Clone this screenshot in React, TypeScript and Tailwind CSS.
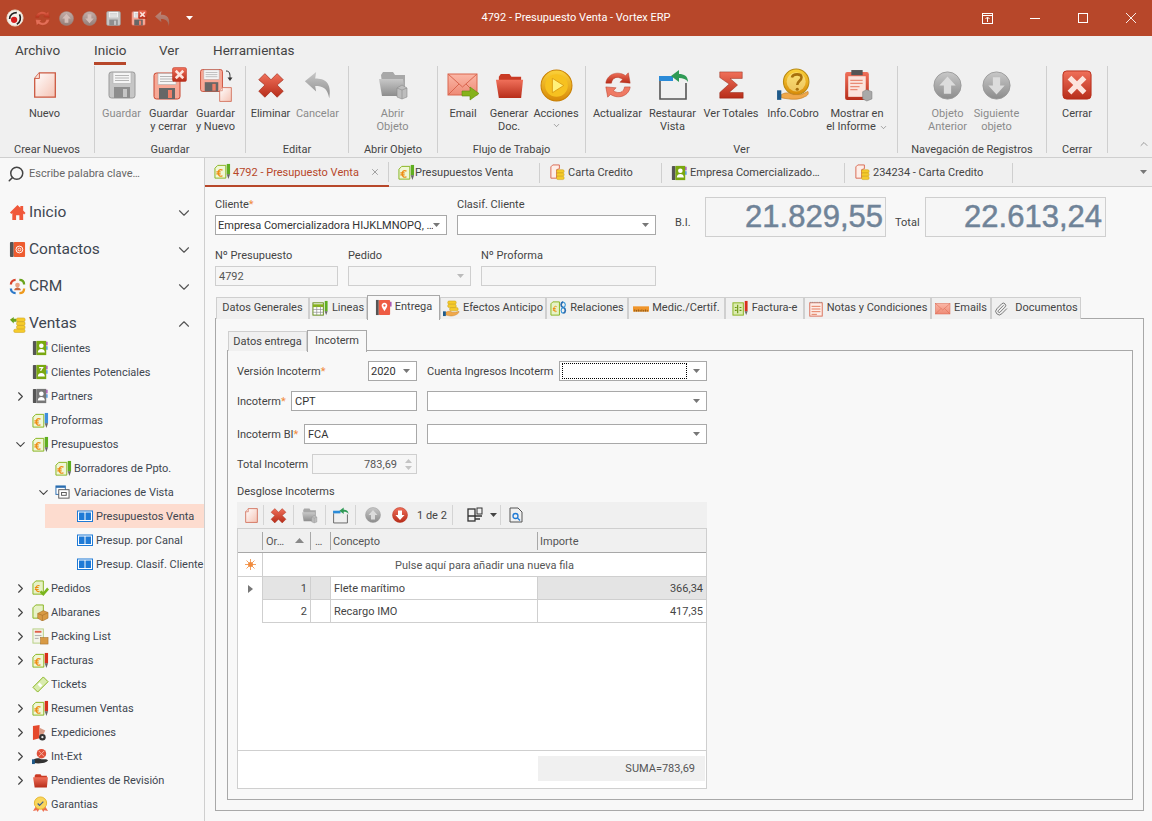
import React from 'react'
import { ChevronDown, ChevronRight, ChevronUp, Paperclip, Search, X as XIcon } from 'lucide-react'

type IP = { s?: number; c?: string; gray?: boolean }

const Defs = () => (
    <svg width="0" height="0" className="absolute">
        <defs>
            <linearGradient id="pink" x1="0" y1="0" x2="1" y2="1"><stop offset="0" stopColor="#ffffff" /><stop offset="1" stopColor="#f5c3b4" /></linearGradient>
            <linearGradient id="red" x1="0" y1="0" x2="0" y2="1"><stop offset="0" stopColor="#f0705a" /><stop offset="1" stopColor="#b72d1a" /></linearGradient>
            <linearGradient id="gray" x1="0" y1="0" x2="0" y2="1"><stop offset="0" stopColor="#c8c8c8" /><stop offset="1" stopColor="#8c8c8c" /></linearGradient>
            <linearGradient id="gold" x1="0" y1="0" x2="0" y2="1"><stop offset="0" stopColor="#fbd23a" /><stop offset="1" stopColor="#d88a08" /></linearGradient>
            <linearGradient id="salmon" x1="0" y1="0" x2="0" y2="1"><stop offset="0" stopColor="#fbb7a6" /><stop offset="1" stopColor="#ee8a76" /></linearGradient>
        </defs>
    </svg>
)

const NewDoc = ({ s = 32 }: IP) => (
    <svg width={s} height={s} viewBox="0 0 32 32"><path d="M10 3h17v26H5V9z" fill="url(#pink)" stroke="#cc5a42" strokeWidth="1.4" /><path d="M10 3v6H5" fill="#f9e0d8" stroke="#cc5a42" strokeWidth="1" /></svg>
)
const Floppy = ({ s = 32, gray }: IP) => (
    <svg width={s} height={s} viewBox="0 0 32 32">
        <rect x="3" y="3" width="26" height="26" rx="2.5" fill={gray ? '#c6c6c6' : '#f7a896'} stroke={gray ? '#9a9a9a' : '#c8452f'} strokeWidth="1" />
        <rect x="7" y="3.5" width="18" height="11" fill="#f5f5f5" stroke="#b0b0b0" strokeWidth=".6" />
        <path d="M9 6.5h14M9 9h14M9 11.5h14" stroke="#a5a5a5" strokeWidth=".8" />
        <rect x="8" y="18" width="16" height="11" fill={gray ? '#8e8e8e' : '#666'} />
        <rect x="17" y="20" width="4" height="8" fill={gray ? '#c6c6c6' : '#ef7f68'} />
    </svg>
)
const XMark = ({ s = 32 }: IP) => (
    <svg width={s} height={s} viewBox="0 0 32 32"><path d="M9 3l7 7 7-7 7 7-7 6 7 7-7 7-7-7-7 7-7-7 7-7-7-6z" fill="url(#red)" stroke="#a32a18" strokeWidth=".8" /></svg>
)
const Undo = ({ s = 32 }: IP) => (
    <svg width={s} height={s} viewBox="0 0 32 32"><path d="M2 12L14 2l-1 7c10 0 18 4 15 21-2-11-7-13-15-13l1 6z" fill="url(#gray)" /></svg>
)
const FolderBox = ({ s = 32 }: IP) => (
    <svg width={s} height={s} viewBox="0 0 32 32"><path d="M4 6l2-3h10l2 3h10v17H6z" fill="#a8a8a8" /><path d="M2 10h24l2 17H5z" fill="url(#gray)" /><path d="M20 19l5-3 5 3v9l-5 2-5-2z" fill="#bdbdbd" stroke="#8c8c8c" strokeWidth=".6" /><path d="M20 19l5 2 5-2M25 21v9" stroke="#8c8c8c" strokeWidth=".6" fill="none" /></svg>
)
const Mail = ({ s = 32, c }: IP) => (
    <svg width={s} height={s} viewBox="0 0 32 32">
        <rect x="1" y="5" width="29" height="21" fill="url(#salmon)" stroke="#d9664f" />
        <path d="M1 5l14.5 13L30 5M1 26l11-11M30 26L19 15" fill="none" stroke="#d9664f" />
        {c !== 'plain' && <path d="M15 22h8v-4l9 6.5-9 6.5v-4h-8z" fill="#86b21b" stroke="#5f8a10" strokeWidth=".6" />}
    </svg>
)
const Folder = ({ s = 32 }: IP) => (
    <svg width={s} height={s} viewBox="0 0 32 32"><path d="M5 7l2-3h9l2 3h10v6H5z" fill="#c93a24" /><path d="M2 10h28l-2 19H5z" fill="url(#red)" /></svg>
)
const PlayCircle = ({ s = 32 }: IP) => (
    <svg width={s} height={s} viewBox="0 0 32 32"><circle cx="16" cy="16" r="15" fill="url(#gold)" stroke="#c98106" /><circle cx="16" cy="16" r="11" fill="#f6c120" /><path d="M12 9l11 7-11 7z" fill="#fff27a" stroke="#d8950d" strokeWidth=".8" /></svg>
)
const Refresh = ({ s = 32 }: IP) => (
    <svg width={s} height={s} viewBox="0 0 32 32">
        <path d="M3 14C4 5 15 0 24 6l3-3 2 11-11-1 3-3c-6-4-11-2-12 4z" fill="url(#red)" stroke="#b13420" strokeWidth=".5" />
        <path d="M29 18c-1 9-12 14-21 8l-3 3-2-11 11 1-3 3c6 4 11 2 12-4z" fill="#ef7a64" stroke="#b13420" strokeWidth=".5" />
    </svg>
)
const RestoreView = ({ s = 32 }: IP) => (
    <svg width={s} height={s} viewBox="0 0 32 32">
        <path d="M2 7h14v5H2z" fill="#2b8bd8" />
        <path d="M3 12v18h26V14" fill="none" stroke="#555" strokeWidth="1.6" />
        <path d="M14 7l8-6v4c5 0 9 2 9 8-2-3-5-4-9-4v4z" fill="#2f9a55" />
    </svg>
)
const Sigma = ({ s = 32 }: IP) => (
    <svg width={s} height={s} viewBox="0 0 32 32"><path d="M4 2h24v7h-13l8 7-9 8h15v6H4v-6l10-9L4 8z" fill="url(#red)" stroke="#8f2413" strokeWidth=".5" /></svg>
)
const Info = ({ s = 32 }: IP) => (
    <svg width={s} height={s} viewBox="0 0 32 32">
        <circle cx="19" cy="13" r="12" fill="url(#gold)" stroke="#b98a12" />
        <circle cx="19" cy="13" r="9" fill="#fdf0a4" opacity=".55" />
        <path d="M15 9c1-4 9-4 9 0 0 3-4 3-4 7" fill="none" stroke="#a8700c" strokeWidth="2.4" /><circle cx="20" cy="20" r="1.5" fill="#a8700c" />
        <path d="M5 25c5-3 9-1 11 0h8l6-3c1 2 0 4-3 5-5 3-12 3-22 1z" fill="#f0a84a" stroke="#c27a1e" strokeWidth=".6" />
        <rect x="1" y="21" width="4" height="9" fill="#1f5a8a" />
    </svg>
)
const Clipboard = ({ s = 32 }: IP) => (
    <svg width={s} height={s} viewBox="0 0 32 32">
        <rect x="4" y="3" width="23" height="27" rx="2" fill="url(#red)" />
        <rect x="7" y="7" width="17" height="20" fill="#fbe3dc" />
        <rect x="10" y="1" width="11" height="5" fill="#555" />
        <path d="M9 11h12M9 14h12M9 17h9M9 20h7" stroke="#e98b75" strokeWidth="1.2" />
        <path d="M21 22l4-2 5 2v7l-5 2-4-2z" fill="#a9a9a9" stroke="#777" strokeWidth=".5" />
    </svg>
)
const NavCircle = ({ s = 32, c = 'gray', up }: IP & { up?: boolean }) => (
    <svg width={s} height={s} viewBox="0 0 32 32">
        <circle cx="16" cy="16" r="15" fill={c === 'red' ? 'url(#red)' : 'url(#gray)'} stroke={c === 'red' ? '#b72d1a' : '#999'} />
        <path d={up ? 'M16 6l9 10h-5v9h-8v-9H7z' : 'M16 26l9-10h-5V7h-8v9H7z'} fill={c === 'red' ? '#fff' : '#dcdcdc'} />
    </svg>
)
const CloseBox = ({ s = 32 }: IP) => (
    <svg width={s} height={s} viewBox="0 0 32 32"><rect x="1" y="1" width="30" height="30" rx="4" fill="url(#red)" stroke="#b72d1a" /><path d="M10 6l6 6 6-6 4 4-6 6 6 6-4 4-6-6-6 6-4-4 6-6-6-6z" fill="#fce4dd" /></svg>
)
const Logo = ({ s = 20 }: IP) => (
    <svg width={s} height={s} viewBox="0 0 20 20"><circle cx="10" cy="10" r="9" fill="#f4f0ea" stroke="#e8d9c6" /><circle cx="9" cy="12" r="3.5" fill="#d51d1d" /><path d="M4 11c0-5 4-7 8-7M15 6c2 4 1 9-3 11" fill="none" stroke="#222" strokeWidth="1.8" /></svg>
)
const DocEuro = ({ s = 18, c = '#3f8fdc' }: IP) => (
    <svg width={s} height={s} viewBox="0 0 18 18">
        <path d="M4 2.500h8.500v13.500H1V5.500z" fill="#eff7d6" stroke="#86b21b" />
        <path d="M9 7.500C6 6 4.500 8 4.500 10.500S6 15 9 13.500M2.500 9.500h4.500M2.500 11.500h4.500" fill="none" stroke="#ee8a10" strokeWidth="1.300" />
        <rect x="13.500" y="1" width="3.500" height="11" fill={c} />
        <path d="M13.500 12h3.500L15.250 17z" fill="#666" />
    </svg>
)
const Book = ({ s = 18, c = '#7aa80f', q }: IP & { q?: boolean }) => (
    <svg width={s} height={s} viewBox="0 0 18 18">
        <rect x="1" y="1" width="4" height="16" rx="1" fill="#555" />
        <rect x="5" y="1" width="11" height="16" fill={c} />
        <rect x="16" y="2" width="1.5" height="4" fill="#a14ab0" /><rect x="16" y="7" width="1.5" height="4" fill="#3f8fdc" />
        {q ? <path d="M8 4h4l-2 3v1" fill="none" stroke="#fff" strokeWidth="1.3" /> : <circle cx="10.5" cy="6.5" r="2.6" fill="#fff" />}
        <path d="M6.5 14c0-3 2-4 4-4s4 1 4 4z" fill="#fff" />
    </svg>
)
const ContactBook = ({ s = 18 }: IP) => (
    <svg width={s} height={s} viewBox="0 0 18 18"><rect x="1" y="1" width="4" height="16" rx="1" fill="#555" /><rect x="5" y="1" width="12" height="16" rx="1" fill="#ee5c30" /><circle cx="11" cy="9" r="3.600" fill="none" stroke="#fff" strokeWidth="1" /><circle cx="11" cy="9" r="1.500" fill="none" stroke="#fff" strokeWidth=".9" /></svg>
)
const Home = ({ s = 18 }: IP) => (
    <svg width={s} height={s} viewBox="0 0 18 18"><path d="M9 1l3 3V2h3v5l2.500 2.500-1.500 1.500-1-1V17h-4v-5H7.500v5H3.500V9.500l-1 1L1 9z" fill="#f0583a" /></svg>
)
const Crm = ({ s = 18 }: IP) => (
    <svg width={s} height={s} viewBox="0 0 18 18">
        <path d="M2 7c0-3 2-5 5-5" fill="none" stroke="#d8432c" strokeWidth="2.400" /><path d="M11 2c3 0 5 2 5 5" fill="none" stroke="#6aa31c" strokeWidth="2.400" />
        <path d="M16 11c0 3-2 5-5 5" fill="none" stroke="#ee9a1f" strokeWidth="2.400" /><path d="M7 16c-3 0-5-2-5-5" fill="none" stroke="#2c78c8" strokeWidth="2.400" />
        <circle cx="9" cy="7.500" r="2.500" fill="#e8a182" /><path d="M5.500 13c0-2 2-3 3.500-3s3.500 1 3.500 3z" fill="#c9673f" />
    </svg>
)
const Coins = ({ s = 18 }: IP) => (
    <svg width={s} height={s} viewBox="0 0 18 18">
        <path d="M1 4l4-3v2h3v3H5v2z" fill="#6aa31c" />
        <rect x="8" y="2" width="9" height="4" rx="1.500" fill="#f5cb2c" stroke="#c79a12" strokeWidth=".5" /><rect x="8" y="6" width="9" height="4" rx="1.500" fill="#f5cb2c" stroke="#c79a12" strokeWidth=".5" />
        <rect x="8" y="10" width="9" height="4" rx="1.500" fill="#f5cb2c" stroke="#c79a12" strokeWidth=".5" /><rect x="5" y="14" width="12" height="3.500" rx="1.500" fill="#f5cb2c" stroke="#c79a12" strokeWidth=".5" />
    </svg>
)
const Variation = ({ s = 16 }: IP) => (
    <svg width={s} height={s} viewBox="0 0 16 16"><rect x="1" y="1" width="10" height="9" fill="#fff" stroke="#2a6db0" /><rect x="1" y="1" width="10" height="2" fill="#2a6db0" /><rect x="4" y="5" width="11" height="9" fill="#fff" stroke="#555" /><rect x="7" y="8" width="5" height="3" fill="none" stroke="#555" /></svg>
)
const Columns = ({ s = 16 }: IP) => (
    <svg width={s} height={s} viewBox="0 0 16 16"><rect x=".5" y="3" width="15" height="10.500" fill="#fff" stroke="#1f7ad6" /><rect x="2" y="4.500" width="5.500" height="7.500" fill="#1f7ad6" /><rect x="8.500" y="4.500" width="5.500" height="7.500" fill="#1f7ad6" /></svg>
)
const DocCheck = ({ s = 18 }: IP) => (
    <svg width={s} height={s} viewBox="0 0 18 18"><path d="M4 1h8v14H1V4z" fill="#e6f2c6" stroke="#86b21b" /><path d="M8 6C5.500 5 4 7 4 9s2 4 4 3M3 8h4M3 10h4" fill="none" stroke="#ee8a10" strokeWidth="1.100" /><path d="M8 13l2-2 2 2 4-5 2 2-6 7z" fill="#7ab51d" /></svg>
)
const DocBox = ({ s = 18 }: IP) => (
    <svg width={s} height={s} viewBox="0 0 18 18"><path d="M4 1h8v14H1V4z" fill="#e6f2c6" stroke="#86b21b" /><path d="M6 10l6-3 5 2v6l-6 3-5-3z" fill="#d89a45" stroke="#9d6520" strokeWidth=".5" /><path d="M6 10l5 2 6-3M11 12v6" fill="none" stroke="#9d6520" strokeWidth=".5" /></svg>
)
const Packing = ({ s = 18 }: IP) => (
    <svg width={s} height={s} viewBox="0 0 18 18"><rect x="1" y="1" width="11" height="15" fill="#f4f4ea" stroke="#b5cf80" /><path d="M3 4h7" stroke="#e0604a" strokeWidth="2" /><path d="M3 8h7M3 11h4" stroke="#aaa" /><rect x="9" y="10" width="8" height="7" fill="#d89a45" stroke="#9d6520" strokeWidth=".5" /></svg>
)
const Ticket = ({ s = 18 }: IP) => (
    <svg width={s} height={s} viewBox="0 0 18 18"><path d="M12 1l5 5L6 17l-5-5z" fill="#d9ecae" stroke="#86b21b" /><path d="M7 8l3 3" stroke="#fff" strokeWidth="3" /></svg>
)
const Expedition = ({ s = 18 }: IP) => (
    <svg width={s} height={s} viewBox="0 0 18 18"><path d="M1 2l7-1v14l-7 2z" fill="#e5492c" /><path d="M8 4l6 3-3 6-3-1z" fill="#d89a85" /><circle cx="11" cy="14" r="3.500" fill="#333" /><circle cx="11" cy="14" r="1.200" fill="#eee" /></svg>
)
const IntExt = ({ s = 18 }: IP) => (
    <svg width={s} height={s} viewBox="0 0 18 18"><circle cx="10" cy="6" r="5" fill="#e0503a" /><path d="M7 3l6 6M13 3L7 9" stroke="#f5b5a5" /><path d="M2 12c4-2 6-1 8 0h5l2 1c-2 3-9 4-15 3z" fill="#333" /><rect x="0" y="12" width="3" height="5" fill="#1f5a8a" /></svg>
)
const Award = ({ s = 18 }: IP) => (
    <svg width={s} height={s} viewBox="0 0 18 18"><path d="M4 11l-3 5 4-1 1 2 3-5 3 5 1-2 4 1-3-5z" fill="#ee6f50" /><circle cx="9" cy="7.500" r="6.500" fill="#f9d65c" stroke="#e6b52c" /><path d="M6 8l2 2 4-4" fill="none" stroke="#3f5f8f" strokeWidth="1.300" /></svg>
)
const Coin = ({ s = 18 }: IP) => (
    <svg width={s} height={s} viewBox="0 0 18 18"><path d="M4 1h7v4l-3 1v9H2V3z" fill="#fdeee8" stroke="#d9664f" /><rect x="8" y="6" width="8" height="3.500" rx="1.500" fill="#f5cb2c" stroke="#c79a12" strokeWidth=".5" /><rect x="8" y="9.500" width="8" height="3.500" rx="1.500" fill="#f5cb2c" stroke="#c79a12" strokeWidth=".5" /><rect x="8" y="13" width="8" height="3.500" rx="1.500" fill="#f5cb2c" stroke="#c79a12" strokeWidth=".5" /></svg>
)
const TableIcon = ({ s = 18 }: IP) => (
    <svg width={s} height={s} viewBox="0 0 18 18"><rect x="1" y="3" width="11" height="13" fill="#fff" stroke="#5f8a10" /><path d="M1 6h11" stroke="#86b21b" strokeWidth="3" /><path d="M1 10h11M1 13h11M5 6v10M9 6v10" stroke="#888" strokeWidth=".7" /><rect x="13.500" y="1" width="3" height="11" fill="#5fae20" /><path d="M13.500 12h3L15 16z" fill="#666" /></svg>
)
const MapBook = ({ s = 18 }: IP) => (
    <svg width={s} height={s} viewBox="0 0 18 18"><rect x="1" y="1" width="3" height="16" fill="#555" /><rect x="4" y="1" width="12" height="16" rx="1" fill="#ee5c44" /><rect x="16" y="3" width="1.500" height="5" fill="#a14ab0" /><path d="M10 4c2 0 3 1.500 3 3 0 2-3 6-3 6S7 9 7 7c0-1.500 1-3 3-3z" fill="#fff" /><circle cx="10" cy="7" r="1.200" fill="#ee5c44" /></svg>
)
const CoinHand = ({ s = 18 }: IP) => (
    <svg width={s} height={s} viewBox="0 0 18 18"><rect x="5" y="1" width="9" height="3.500" rx="1.500" fill="#f5cb2c" stroke="#c79a12" strokeWidth=".5" /><rect x="5" y="4.500" width="9" height="3.500" rx="1.500" fill="#f5cb2c" stroke="#c79a12" strokeWidth=".5" /><rect x="7" y="8" width="9" height="3.500" rx="1.500" fill="#f5cb2c" stroke="#c79a12" strokeWidth=".5" /><path d="M3 13c3-2 5-1 7 0h3l4-1c0 3-5 5-9 5l-5-1z" fill="#f0a84a" stroke="#c27a1e" strokeWidth=".4" /><rect x="0" y="12" width="3" height="5" fill="#1f5a8a" /></svg>
)
const Relation = ({ s = 18 }: IP) => (
    <svg width={s} height={s} viewBox="0 0 18 18"><path d="M3 2h7v14H1V4z" fill="#e6f2c6" stroke="#86b21b" /><path d="M7 7C5 6 4 7.500 4 9.500s1 3.500 3 2.500M3 9h3M3 10.800h3" fill="none" stroke="#ee8a10" /><path d="M14 2c-3 1-3 5 0 6 3 1 3 5 0 6" fill="none" stroke="#2a6db0" strokeWidth="1.800" /><path d="M14 2c3 1 3 5 0 6-3 1-3 5 0 6" fill="none" stroke="#2a90d8" strokeWidth="1.100" /></svg>
)
const Ruler = ({ s = 18 }: IP) => (
    <svg width={s} height={s} viewBox="0 0 18 18"><rect x="0" y="6" width="18" height="6" fill="#f0952a" /><path d="M2 12V9.500M4 12v-2M6 12V9.500M8 12v-2M10 12V9.500M12 12v-2M14 12V9.500M16 12v-2" stroke="#6d4310" strokeWidth=".8" /></svg>
)
const Invoice = ({ s = 18 }: IP) => (
    <svg width={s} height={s} viewBox="0 0 18 18"><rect x="1" y="3" width="11" height="13" fill="#dcebb0" stroke="#86b21b" /><path d="M6 5v9M3 8h2M8 8h2M3 11h2M8 11h2" stroke="#6a9512" strokeWidth="1.200" /><rect x="13.500" y="1" width="3" height="11" fill="#d8301c" /><path d="M13.500 12h3L15 16z" fill="#666" /></svg>
)
const Notes = ({ s = 18 }: IP) => (
    <svg width={s} height={s} viewBox="0 0 18 18"><rect x="2" y="2" width="14" height="15" fill="#fdeee8" stroke="#d9664f" /><path d="M3 2v-1M5 2v-1M7 2v-1M9 2v-1M11 2v-1M13 2v-1M15 2v-1" stroke="#888" /><path d="M4 6h10M4 9h10M4 12h10M4 15h6" stroke="#e0704f" /></svg>
)

const Caret = ({ c = '#777' }: { c?: string }) => (
    <svg width="7" height="4" viewBox="0 0 7 4" className="shrink-0"><path d="M0 0h7L3.500 4z" fill={c} /></svg>
)

const Req = () => <span className="text-[#f08a3c]">*</span>

const RibbonBtn = ({ w, icon, l1, l2, off, arrow }: { w: string; icon: React.ReactNode; l1: string; l2?: string; off?: boolean; arrow?: string }) => (
    <div className={`${w} flex flex-col items-center ${off ? 'text-[#8b8b8b]' : 'text-[#444]'}`}>
        <div className="h-[38px] flex items-center justify-center">{icon}</div>
        <div className="mt-[3px] text-center leading-[13px] whitespace-nowrap">{l1}</div>
        {l2 && <div className="text-center leading-[13px] whitespace-nowrap">{l2}{arrow === 'in' && <ChevronDown size={9} strokeWidth={1.5} className="inline ml-[3px] text-[#666]" />}</div>}
        {arrow === 'below' && <ChevronDown size={9} strokeWidth={1.5} className="text-[#666] mt-[1px]" />}
    </div>
)

const RibbonGroup = ({ w, label, pl, center, children }: { w: string; label: string; pl?: string; center?: boolean; children: React.ReactNode }) => (
    <div className={`${w} h-[87px] border-r border-[#cfcfcf] flex flex-col justify-between shrink-0`}>
        <div className={`flex ${pl ?? ''} ${center ? 'justify-center' : ''}`}>{children}</div>
        <div className="h-[14px] -mb-[4px] leading-[14px] text-center text-[#444] whitespace-nowrap">{label}</div>
    </div>
)

const Ribbon = () => (
    <div className="h-[122px] bg-[#f0f0f0] border-b border-[#cfcfcf] text-[11px]">
        <div className="h-[30px] flex items-start pl-[15px] pt-[5px] text-[13.500px] text-[#444] leading-[19px]">
            <div className="w-[79px]">Archivo</div>
            <div className="w-[65px]"><span className="inline-block border-b-[3px] border-[#b7472a] pb-[2px]">Inicio</span></div>
            <div className="w-[54px]">Ver</div>
            <div>Herramientas</div>
        </div>
        <div className="flex items-start">
            <RibbonGroup w="w-[95px]" label="Crear Nuevos" center>
                <RibbonBtn w="w-[60px] -ml-[5px]" icon={<NewDoc s={30} />} l1="Nuevo" />
            </RibbonGroup>
            <RibbonGroup w="w-[151px]" label="Guardar" pl="pl-[3px]">
                <RibbonBtn w="w-[47px]" off icon={<Floppy s={32} gray />} l1="Guardar" />
                <RibbonBtn w="w-[47px]" l1="Guardar" l2="y cerrar" icon={
                    <div className="relative w-[36px] h-[36px] pt-[3px]"><Floppy s={32} /><div className="absolute right-0 top-0"><CloseBox s={15} /></div></div>
                } />
                <RibbonBtn w="w-[47px]" l1="Guardar" l2="y Nuevo" icon={
                    <div className="relative w-[36px] h-[36px]">
                        <Floppy s={27} />
                        <div className="absolute right-[1px] top-[3px]">
                            <svg width="9" height="13" viewBox="0 0 9 13" fill="none" stroke="#333"><path d="M2 1c4 0 4 3 4 7" /><path d="M3.500 7.500h5L6 11z" fill="#333" stroke="none" /></svg>
                        </div>
                        <div className="absolute right-0 bottom-0"><NewDoc s={17} /></div>
                    </div>
                } />
            </RibbonGroup>
            <RibbonGroup w="w-[103px]" label="Editar" pl="pl-[1px]">
                <RibbonBtn w="w-[47px]" icon={<XMark s={28} />} l1="Eliminar" />
                <RibbonBtn w="w-[47px]" off icon={<Undo s={30} />} l1="Cancelar" />
            </RibbonGroup>
            <RibbonGroup w="w-[89px]" label="Abrir Objeto" center>
                <RibbonBtn w="w-[60px] -ml-[1px]" off icon={<FolderBox s={32} />} l1="Abrir" l2="Objeto" />
            </RibbonGroup>
            <RibbonGroup w="w-[148px]" label="Flujo de Trabajo" pl="pl-[2px]">
                <RibbonBtn w="w-[46px]" icon={<Mail s={32} />} l1="Email" />
                <RibbonBtn w="w-[46px]" icon={<Folder s={31} />} l1="Generar" l2="Doc." />
                <RibbonBtn w="w-[48px]" icon={<PlayCircle s={33} />} l1="Acciones" arrow="below" />
            </RibbonGroup>
            <RibbonGroup w="w-[312px]" label="Ver" pl="pl-[4px]">
                <RibbonBtn w="w-[55px]" icon={<Refresh s={30} />} l1="Actualizar" />
                <RibbonBtn w="w-[55px]" icon={<RestoreView s={32} />} l1="Restaurar" l2="Vista" />
                <RibbonBtn w="w-[62px]" icon={<Sigma s={30} />} l1="Ver Totales" />
                <RibbonBtn w="w-[62px]" icon={<Info s={34} />} l1="Info.Cobro" />
                <RibbonBtn w="w-[66px]" icon={<Clipboard s={33} />} l1="Mostrar en" l2="el Informe" arrow="in" />
            </RibbonGroup>
            <RibbonGroup w="w-[149px]" label="Navegación de Registros" center>
                <RibbonBtn w="w-[49px]" off icon={<NavCircle s={29} up />} l1="Objeto" l2="Anterior" />
                <RibbonBtn w="w-[49px]" off icon={<NavCircle s={29} />} l1="Siguiente" l2="objeto" />
            </RibbonGroup>
            <RibbonGroup w="w-[61px]" label="Cerrar" center>
                <RibbonBtn w="w-[50px]" icon={<CloseBox s={30} />} l1="Cerrar" />
            </RibbonGroup>
            <div className="flex-1 h-[87px] flex justify-end items-end pr-[1px]">
                <ChevronUp size={12} strokeWidth={1.4} className="text-[#777] mr-[1px] mb-[3px]" />
            </div>
        </div>
    </div>
)

const TitleBar = () => (
    <div className="h-[36px] bg-[#b7472a] flex items-center text-white text-[11px]">
        <div className="w-[462px] flex items-center pl-[3px] shrink-0">
            <div className="w-[24px] flex justify-center"><Logo s={18} /></div>
            <div className="w-[30px] flex justify-center opacity-80"><Refresh s={17} /></div>
            <div className="w-[18px] flex justify-center opacity-80"><NavCircle s={15} up /></div>
            <div className="w-[28px] flex justify-center opacity-80"><NavCircle s={15} /></div>
            <div className="w-[20px] flex justify-center"><Floppy s={17} gray /></div>
            <div className="w-[30px] flex justify-center">
                <div className="relative w-[16px] h-[17px]"><Floppy s={17} /><div className="absolute -right-[1px] top-0"><CloseBox s={9} /></div></div>
            </div>
            <div className="w-[18px] flex justify-center opacity-50"><Undo s={17} /></div>
            <div className="w-[36px] flex justify-center"><Caret c="#fff" /></div>
        </div>
        <div className="w-[228px] text-center whitespace-nowrap">4792 - Presupuesto Venta - Vortex ERP</div>
        <div className="flex-1 flex justify-end">
            <div className="w-[48px] h-[36px] flex items-center justify-center">
                <svg width="11" height="11" viewBox="0 0 11 11" fill="none" stroke="#fff"><rect x=".5" y=".5" width="10" height="10" /><path d="M.5 2.500h10M5.500 9V4.500M3.500 6l2-2 2 2" /></svg>
            </div>
            <div className="w-[48px] h-[36px] flex items-center justify-center">
                <svg width="10" height="10" viewBox="0 0 10 10" stroke="#fff"><path d="M0 5.500h10" /></svg>
            </div>
            <div className="w-[48px] h-[36px] flex items-center justify-center">
                <svg width="10" height="10" viewBox="0 0 10 10" fill="none" stroke="#fff"><rect x=".5" y=".5" width="9" height="9" /></svg>
            </div>
            <div className="w-[45px] pl-[3px] h-[36px] flex items-center justify-center">
                <svg width="10" height="10" viewBox="0 0 10 10" stroke="#fff" strokeWidth=".9"><path d="M0 0l10 10M10 0L0 10" /></svg>
            </div>
        </div>
    </div>
)

const NavHead = ({ icon, text, open, last }: { icon: React.ReactNode; text: string; open?: boolean; last?: boolean }) => (
    <div className={`${last ? 'h-[31px] pt-[7px]' : 'h-[37px]'} flex items-center pl-[9px] pr-[11px] text-[15.500px] text-[#3e4650]`}>
        <div className="w-[20px] shrink-0">{icon}</div>
        <div className="flex-1">{text}</div>
        {open ? <ChevronUp size={18} strokeWidth={1.500} className="text-[#555]" /> : <ChevronDown size={18} strokeWidth={1.500} className="text-[#555]" />}
    </div>
)

const NavRow = ({ pad, arrow, icon, text, sel }: { pad: string; arrow?: 'r' | 'd'; icon: React.ReactNode; text: string; sel?: boolean }) => (
    <div className={`h-[24px] flex items-center whitespace-nowrap ${pad} ${sel ? 'bg-[#fddccf]' : ''}`}>
        <div className="w-[19px] shrink-0 flex">
            {arrow === 'r' && <ChevronRight size={15} strokeWidth={1.800} className="text-[#444]" />}
            {arrow === 'd' && <ChevronDown size={15} strokeWidth={1.800} className="text-[#444]" />}
        </div>
        <div className="w-[19px] shrink-0">{icon}</div>
        <div className="pt-[2px]">{text}</div>
    </div>
)

const Sidebar = () => (
    <div className="w-[205px] h-full shrink-0 bg-[#f8f8f8] border-r border-[#cfcfcf] overflow-hidden text-[11px] text-[#3e4650]">
        <div className="h-[35px] flex items-center pl-[7px] pb-[4px]">
            <Search size={18} strokeWidth={2} className="text-[#444] -scale-x-100" />
            <div className="ml-[4px] pt-[2px] text-[#666]">Escribe palabra clave…</div>
        </div>
        <div className="h-px" />
        <NavHead icon={<Home s={17} />} text="Inicio" />
        <NavHead icon={<ContactBook s={17} />} text="Contactos" />
        <NavHead icon={<Crm s={17} />} text="CRM" />
        <NavHead icon={<Coins s={17} />} text="Ventas" open last />
        <NavRow pad="pl-[13px]" icon={<Book s={16} />} text="Clientes" />
        <NavRow pad="pl-[13px]" icon={<Book s={16} q />} text="Clientes Potenciales" />
        <NavRow pad="pl-[13px]" arrow="r" icon={<Book s={16} c="#777" />} text="Partners" />
        <NavRow pad="pl-[13px]" icon={<DocEuro s={17} />} text="Proformas" />
        <NavRow pad="pl-[13px]" arrow="d" icon={<DocEuro s={17} c="#5fae20" />} text="Presupuestos" />
        <NavRow pad="pl-[36px]" icon={<DocEuro s={17} c="#5fae20" />} text="Borradores de Ppto." />
        <NavRow pad="pl-[36px]" arrow="d" icon={<Variation s={15} />} text="Variaciones de Vista" />
        <div className="pl-[45px]"><NavRow pad="pl-[13px]" sel icon={<Columns s={16} />} text="Presupuestos Venta" /></div>
        <div className="pl-[45px]"><NavRow pad="pl-[13px]" icon={<Columns s={16} />} text="Presup. por Canal" /></div>
        <div className="pl-[45px]"><NavRow pad="pl-[13px]" icon={<Columns s={16} />} text="Presup. Clasif. Cliente" /></div>
        <NavRow pad="pl-[13px]" arrow="r" icon={<DocCheck s={17} />} text="Pedidos" />
        <NavRow pad="pl-[13px]" arrow="r" icon={<DocBox s={17} />} text="Albaranes" />
        <NavRow pad="pl-[13px]" arrow="r" icon={<Packing s={17} />} text="Packing List" />
        <NavRow pad="pl-[13px]" arrow="r" icon={<DocEuro s={17} c="#d8301c" />} text="Facturas" />
        <NavRow pad="pl-[13px]" icon={<Ticket s={17} />} text="Tickets" />
        <NavRow pad="pl-[13px]" arrow="r" icon={<DocEuro s={17} c="#d8301c" />} text="Resumen Ventas" />
        <NavRow pad="pl-[13px]" arrow="r" icon={<Expedition s={17} />} text="Expediciones" />
        <NavRow pad="pl-[13px]" arrow="r" icon={<IntExt s={17} />} text="Int-Ext" />
        <NavRow pad="pl-[13px]" arrow="r" icon={<Folder s={17} />} text="Pendientes de Revisión" />
        <NavRow pad="pl-[13px]" icon={<Award s={17} />} text="Garantias" />
        <NavRow pad="pl-[13px]" icon={<Folder s={17} />} text="" />
    </div>
)

const DocTab = ({ w, icon, text, active, ic }: { w: string; icon: React.ReactNode; text: string; active?: boolean; ic?: string }) => (
    <div className={`${w} h-[29px] flex items-center shrink-0 ${active ? 'border-b-2 border-[#b7472a]' : ''}`}>
        <div className="flex-1 h-[20px] flex items-center pl-[9px] border-r border-[#cfcfcf]">
            <div className={`${ic ?? 'w-[19px]'} shrink-0`}>{icon}</div>
            <div className={`flex-1 whitespace-nowrap ${active ? 'pt-[3px] text-[#b7472a]' : 'pt-[2px] text-[#444]'}`}>{text}</div>
            {active && <XIcon size={10} strokeWidth={1.600} className="mr-[8px] text-[#777]" />}
        </div>
    </div>
)

const SubTab = ({ w, icon, text, active, gap }: { w: string; icon?: React.ReactNode; text: string; active?: boolean; gap?: string }) => (
    <div className={`${w} flex items-center justify-center shrink-0 whitespace-nowrap border-t border-x ${active ? 'h-[25px] bg-[#f8f8f8] border-[#a8a8a8] relative -mb-px pb-[2px]' : 'h-[22px] bg-[#f0f0f0] border-[#cfcfcf]'}`}>
        {icon && <div className={`${gap ?? 'mr-[3px]'} shrink-0`}>{icon}</div>}
        <div>{text}</div>
    </div>
)

const Box = ({ w, children, off, right, pad }: { w: string; children?: React.ReactNode; off?: boolean; right?: boolean; pad?: string }) => (
    <div className={`${w} h-[20px] shrink-0 border flex items-center ${off ? 'border-[#cfcfcf] bg-[#f6f6f6] text-[#555]' : 'border-[#a8a8a8] bg-white text-[#333]'} ${right ? 'justify-end' : ''} ${pad ?? 'pl-[3px] pt-[2px]'} overflow-hidden whitespace-nowrap`}>{children}</div>
)

const Combo = ({ w, text, off, focus }: { w: string; text?: string; off?: boolean; focus?: boolean }) => (
    <Box w={w} off={off} pad="pl-[2px] pr-[6px]">
        <div className={`flex-1 h-[16px] leading-[17px] overflow-hidden ${focus ? 'border border-dotted border-black mr-[6px]' : ''}`}>{text}</div>
        <Caret c={off ? '#bbb' : '#777'} />
    </Box>
)

const Field = ({ w, label, children }: { w: string; label: React.ReactNode; children: React.ReactNode }) => (
    <div className={`${w} shrink-0`}>
        <div className="h-[18px] leading-[16px] text-[#444]">{label}</div>
        {children}
    </div>
)

const Sep = () => <div className="w-px h-[20px] bg-[#d4d4d4] shrink-0" />

const Grid = () => (
    <div className="w-[470px]">
        <div className="h-[26px] bg-[#f0f0f0] flex items-center pl-[3px] text-[#444]">
            <div className="w-[23px] flex justify-center"><NewDoc s={17} /></div><Sep />
            <div className="w-[29px] flex justify-center"><XMark s={17} /></div><Sep />
            <div className="w-[31px] flex justify-center"><FolderBox s={17} /></div><Sep />
            <div className="w-[29px] flex justify-center"><RestoreView s={17} /></div><Sep />
            <div className="w-[96px] flex items-center pl-[9px]">
                <NavCircle s={16} up />
                <div className="ml-[11px]"><NavCircle s={16} c="red" /></div>
                <div className="ml-[9px] pt-[2px] whitespace-nowrap">1 de 2</div>
            </div><Sep />
            <div className="w-[47px] flex items-center pl-[14px]">
                <svg width="16" height="16" viewBox="0 0 16 16" fill="none" stroke="#333" strokeWidth="1.300"><rect x="1" y="2" width="7" height="12" /><rect x="10" y="1" width="5" height="6" strokeWidth="1" /><path d="M1 9h14M8 12h5" /></svg>
                <div className="ml-[7px]"><Caret c="#444" /></div>
            </div><Sep />
            <div className="pl-[8px]">
                <svg width="14" height="16" viewBox="0 0 14 16" fill="none"><path d="M1 1h8l4 4v10H1z" stroke="#555" /><circle cx="6.500" cy="9" r="2.500" stroke="#1f7ad6" strokeWidth="1.300" /><path d="M8.500 11l2.500 2.500" stroke="#1f7ad6" strokeWidth="1.300" /></svg>
            </div>
        </div>
        <div className="h-[261px] border border-[#cfcfcf] bg-white flex flex-col text-[#444]">
            <div className="h-[24px] shrink-0 bg-[#f0f0f0] border-b border-[#a8a8a8] flex items-center">
                <div className="w-[24px]" />
                <div className="w-[48px] h-[18px] border-l border-[#a8a8a8] flex items-center pl-[3px] pr-[6px] justify-between text-[#555]"><span className="pt-[3px]">Or…</span> <svg width="9" height="5" viewBox="0 0 9 5"><path d="M0 5h9L4.500 0z" fill="#888" /></svg></div>
                <div className="w-[20px] h-[18px] border-l border-[#a8a8a8] pl-[4px] leading-[19px] text-[#555]">…</div>
                <div className="w-[207px] h-[18px] border-l border-[#a8a8a8] pl-[2px] leading-[19px] text-[#555]">Concepto</div>
                <div className="w-[169px] h-[18px] border-l border-[#a8a8a8] pl-[2px] leading-[19px] text-[#555]">Importe</div>
            </div>
            <div className="h-[24px] shrink-0 flex border-b border-[#cfcfcf]">
                <div className="w-[24px] shrink-0 flex items-center justify-center text-[#f08a3c]">
                    <svg width="11" height="11" viewBox="0 0 11 11"><circle cx="5.500" cy="5.500" r="2.500" fill="#f08a3c" /><path d="M5.500 0v11M0 5.500h11M1.500 1.500l8 8M9.500 1.500l-8 8" stroke="#f08a3c" strokeWidth=".8" /></svg>
                </div>
                <div className="flex-1 border-l border-[#cfcfcf] flex items-center justify-center pt-[3px] text-[#555]">Pulse aquí para añadir una nueva fila</div>
            </div>
            <div className="h-[23px] shrink-0 flex">
                <div className="w-[24px] shrink-0 flex items-center justify-center"><svg width="5" height="8" viewBox="0 0 5 8"><path d="M0 0l5 4-5 4z" fill="#777" /></svg></div>
                <div className="w-[48px] border-l border-b border-[#cfcfcf] bg-[#e4e4e4] flex items-center justify-end pr-[3px] pt-[2px]">1</div>
                <div className="w-[20px] border-l border-b border-[#cfcfcf] bg-[#e4e4e4]" />
                <div className="w-[207px] border-l border-b border-[#cfcfcf] flex items-center pl-[3px] pt-[2px]">Flete marítimo</div>
                <div className="w-[169px] border-l border-b border-[#cfcfcf] bg-[#e4e4e4] flex items-center justify-end pr-[3px] pt-[2px]">366,34</div>
            </div>
            <div className="h-[23px] shrink-0 flex">
                <div className="w-[24px] shrink-0" />
                <div className="w-[48px] border-l border-b border-[#cfcfcf] flex items-center justify-end pr-[3px] pt-[2px]">2</div>
                <div className="w-[20px] border-l border-b border-[#cfcfcf]" />
                <div className="w-[207px] border-l border-b border-[#cfcfcf] flex items-center pl-[3px] pt-[2px]">Recargo IMO</div>
                <div className="w-[169px] border-l border-b border-[#cfcfcf] flex items-center justify-end pr-[3px] pt-[2px]">417,35</div>
            </div>
            <div className="flex-1" />
            <div className="h-[38px] shrink-0 border-t border-[#cfcfcf] pt-[5px] flex justify-end pr-[1px]">
                <div className="w-[167px] h-[25px] bg-[#f0f0f0] flex items-center justify-end pr-[10px] pt-[2px] text-[#555]">SUMA=783,69</div>
            </div>
        </div>
    </div>
)

const Content = () => (
    <div className="flex-1 min-w-0 h-full bg-[#f8f8f8] text-[11px] text-[#444]">
        <div className="h-[29px] bg-[#f0f0f0] border-b border-[#cfcfcf] flex">
            <DocTab w="w-[184px]" active icon={<DocEuro s={17} c="#5fae20" />} text="4792 - Presupuesto Venta" />
            <DocTab w="w-[151px]" ic="w-[17px]" icon={<DocEuro s={17} c="#5fae20" />} text="Presupuestos Venta" />
            <DocTab w="w-[122px]" icon={<Coin s={17} />} text="Carta Credito" />
            <DocTab w="w-[183px]" icon={<Book s={16} />} text="Empresa Comercializado…" />
            <DocTab w="w-[168px]" icon={<Coin s={17} />} text="234234 - Carta Credito" />
            <div className="flex-1 flex items-center justify-end pr-[5px]"><Caret /></div>
        </div>
        <div className="pl-[10px] pt-[10px]">
            <div className="flex">
                <Field w="w-[242px]" label={<>Cliente<Req /></>}><Combo w="w-[232px]" text="Empresa Comercializadora HIJKLMNOPQ, …" /></Field>
                <Field w="w-[218px]" label="Clasif. Cliente"><Combo w="w-[199px]" /></Field>
                <div className="w-[30px] pt-[19px] leading-[14px]">B.I.</div>
                <div className="w-[181px] h-[40px] border border-[#cfcfcf] bg-[#f6f6f6] flex items-center justify-end pr-[2px] text-[31px] text-[#6f8398] font-['Liberation_Sans',sans-serif] [-webkit-text-stroke:0.5px_#6f8398]">21.829,55</div>
                <div className="w-[39px] pl-[9px] pt-[19px] leading-[14px]">Total</div>
                <div className="w-[181px] h-[40px] border border-[#cfcfcf] bg-[#f6f6f6] flex items-center justify-end pr-[3px] text-[31px] text-[#6f8398] font-['Liberation_Sans',sans-serif] [-webkit-text-stroke:0.5px_#6f8398]">22.613,24</div>
            </div>
            <div className="flex mt-[11px]">
                <Field w="w-[133px]" label="Nº Presupuesto"><Box w="w-[123px]" off>4792</Box></Field>
                <Field w="w-[133px]" label="Pedido"><Combo w="w-[123px]" off /></Field>
                <Field w="w-[175px]" label="Nº Proforma"><Box w="w-[175px]" off /></Field>
            </div>
            <div className="flex items-end h-[25px] mt-[8px] pl-px">
                <SubTab w="w-[93px]" text="Datos Generales" />
                <SubTab w="w-[58px]" icon={<TableIcon s={17} />} text="Lineas" />
                <SubTab w="w-[73px]" active icon={<MapBook s={17} />} text="Entrega" />
                <SubTab w="w-[106px]" icon={<CoinHand s={17} />} text="Efectos Anticipo" />
                <SubTab w="w-[82px]" icon={<Relation s={17} />} text="Relaciones" />
                <SubTab w="w-[97px]" icon={<Ruler s={16} />} text="Medic./Certif." />
                <SubTab w="w-[79px]" icon={<Invoice s={17} />} text="Factura-e" />
                <SubTab w="w-[127px]" icon={<Notes s={16} />} text="Notas y Condiciones" />
                <SubTab w="w-[60px]" icon={<Mail s={16} c="plain" />} text="Emails" />
                <SubTab w="w-[90px]" icon={<Paperclip size={14} strokeWidth={1.300} className="text-[#555]" />} gap="mr-[7px]" text="Documentos" />
            </div>
            <div className="w-[929px] h-[493px] -mt-px border border-[#a8a8a8]">
                <div className="flex items-end h-[22px] mt-[10px] ml-[12px]">
                    <div className="w-[79px] h-[20px] bg-[#f0f0f0] border-t border-x border-[#cfcfcf] flex items-center justify-center pt-[2px]">Datos entrega</div>
                    <div className="w-[60px] h-[22px] bg-[#f8f8f8] border-t border-x border-[#a8a8a8] flex items-center justify-center relative z-10 -mb-px">Incoterm</div>
                </div>
                <div className="ml-[11px] w-[906px] h-[450px] -mt-px border border-[#a8a8a8] pl-[9px] pt-[10px]">
                    <div className="flex items-center h-[20px]">
                        <div className="w-[131px] shrink-0 pt-[2px] whitespace-nowrap">Versión Incoterm<Req /></div>
                        <Combo w="w-[49px]" text="2020" />
                        <div className="w-[142px] shrink-0 pl-[10px] pt-[2px] whitespace-nowrap">Cuenta Ingresos Incoterm</div>
                        <Combo w="w-[148px]" focus />
                    </div>
                    <div className="flex items-center h-[20px] mt-[10px]">
                        <div className="w-[54px] shrink-0 pt-[2px] whitespace-nowrap">Incoterm<Req /></div>
                        <Box w="w-[126px]">CPT</Box>
                        <div className="ml-[10px]"><Combo w="w-[280px]" /></div>
                    </div>
                    <div className="flex items-center h-[20px] mt-[13px]">
                        <div className="w-[67px] shrink-0 pt-[2px] whitespace-nowrap">Incoterm BI<Req /></div>
                        <Box w="w-[113px]">FCA</Box>
                        <div className="ml-[10px]"><Combo w="w-[280px]" /></div>
                    </div>
                    <div className="flex items-center h-[20px] mt-[10px]">
                        <div className="w-[75px] shrink-0 pt-[2px] whitespace-nowrap">Total Incoterm</div>
                        <Box w="w-[105px]" off right pad="pr-[4px]">
                            <span className="pt-[2px]">783,69</span>
                            <div className="ml-[8px] flex flex-col gap-[3px]">
                                <svg width="7" height="4" viewBox="0 0 7 4"><path d="M0 4h7L3.500 0z" fill="#c4c4c4" /></svg>
                                <Caret c="#c4c4c4" />
                            </div>
                        </Box>
                    </div>
                    <div className="h-[14px] leading-[15px] mt-[10px]">Desglose Incoterms</div>
                    <div className="mt-[4px]"><Grid /></div>
                </div>
            </div>
        </div>
    </div>
)

export default function App() {
    return (
        <div className="w-[1152px] h-[821px] overflow-hidden flex flex-col font-['Roboto',sans-serif]">
            <Defs />
            <TitleBar />
            <Ribbon />
            <div className="flex h-[663px]">
                <Sidebar />
                <Content />
            </div>
        </div>
    )
}
